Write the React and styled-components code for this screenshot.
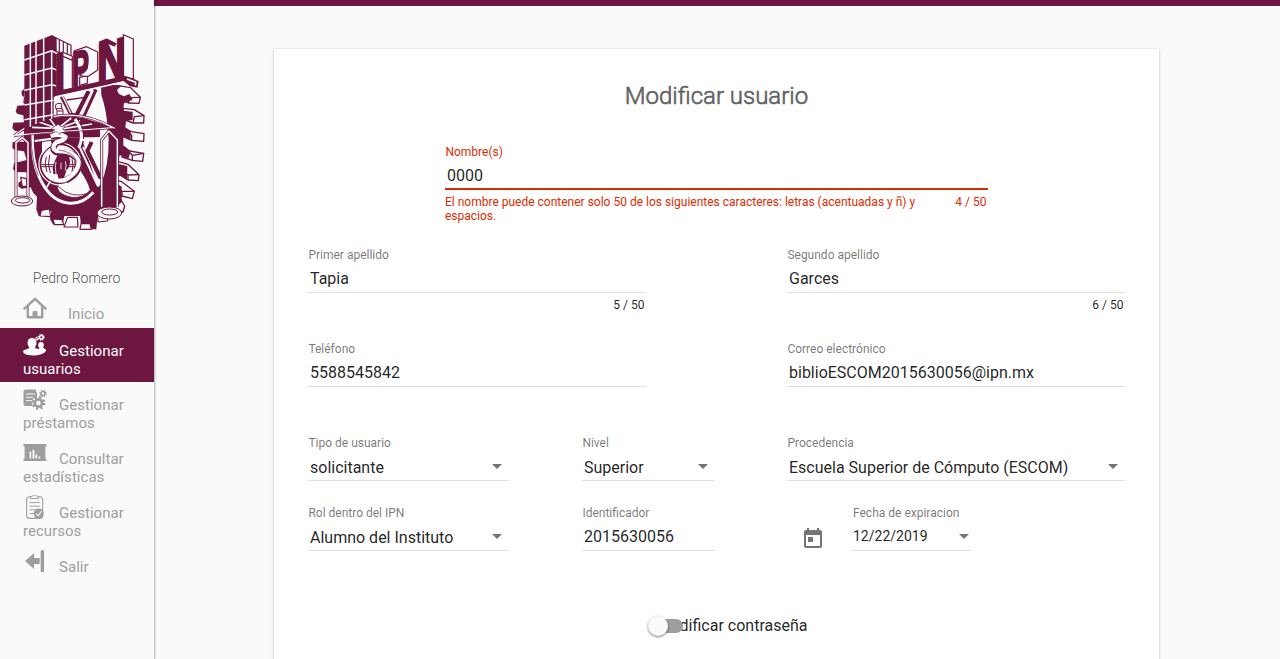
import React from "react";
import styled, { createGlobalStyle } from "styled-components";

const WINE = "#6c1640";
const PAPER = "#fafafa";

const GlobalStyle = createGlobalStyle`
  * { box-sizing: border-box; }
  html, body { margin: 0; padding: 0; }
  body {
    height: 659px;
    overflow: hidden;
    background: ${PAPER};
    color: rgba(0, 0, 0, 0.87);
    font-family: Roboto, "Liberation Sans", sans-serif;
    font-size: 16px;
  }
`;

const Page = styled.div`
  display: flex;
  height: 659px;
  overflow: hidden;
`;

const Sidebar = styled.aside`
  position: relative;
  z-index: 1;
  flex: 0 0 154px;
  height: 659px;
  background: ${PAPER};
  box-shadow: 0 1px 3px rgba(0, 0, 0, 0.3), 0 0 2px rgba(0, 0, 0, 0.4);
`;

const LogoSvg = styled.svg`
  display: block;
  width: 154px;
  height: 250px;
`;

const UserName = styled.div`
  height: 41px;
  padding: 19px 1px 0 0;
  text-align: center;
  font-size: 14px;
  font-weight: 300;
  line-height: 18px;
  letter-spacing: -0.05px;
  color: rgba(0, 0, 0, 0.72);
`;

const NavItem = styled.a`
  display: block;
  height: ${(p) => p.$height}px;
  padding-left: 23px;
  font-size: 15px;
  line-height: 18px;
  color: ${(p) => (p.$active ? "#fff" : "#9e9e9e")};
  background: ${(p) => (p.$active ? WINE : "transparent")};
`;

const NavFirst = styled.div`
  display: flex;
  height: 32px;
  align-items: flex-end;
  gap: ${(p) => p.$gap}px;
`;

const NavLine = styled.span`
  letter-spacing: 0.03px;
`;

const NavIcon = styled.svg`
  width: 24px;
  height: 24px;
  margin-bottom: 3px;
  flex: none;
`;

const Main = styled.main`
  flex: 1;
  border-top: 6px solid ${WINE};
  padding: 43px 121px 0 120px;
`;

const Card = styled.section`
  height: 640px;
  padding: 33px 34px 0;
  background: #fff;
  box-shadow: 0 1px 3px rgba(0, 0, 0, 0.2), 0 0 1px rgba(0, 0, 0, 0.14);
`;

const Title = styled.h2`
  height: 63px;
  margin: 0;
  text-align: center;
  font-size: 24px;
  font-weight: 300;
  line-height: 28px;
  -webkit-text-stroke: 0.6px #616161;
  color: #616161;
`;

const FormRow = styled.div`
  display: grid;
  grid-template-columns: ${(p) => p.$columns};
  justify-content: ${(p) => (p.$centered ? "center" : "start")};
  height: ${(p) => p.$height}px;
`;

const FieldBox = styled.div`
  color: ${(p) => (p.$error ? "#dd2c00" : "inherit")};
`;

const Label = styled.label`
  display: block;
  height: 15px;
  padding-left: ${(p) => p.$indent || 0.4}px;
  font-size: 12px;
  line-height: 14px;
  color: ${(p) => (p.$error ? "#dd2c00" : "rgba(0,0,0,0.54)")};
`;

const Value = styled.div`
  display: flex;
  align-items: center;
  justify-content: space-between;
  height: 30px;
  padding: ${(p) => (p.$select ? "4px 7px 0 2px" : p.$date ? "1px 2px 0 2px" : p.$error ? "4px 6px 0 2px" : "2px 6px 0 2px")};
  border-bottom: ${(p) => (p.$error ? "2px solid #dd2c00" : "1px solid #e0e0e0")};
  font-size: ${(p) => (p.$date ? 14 : 16)}px;
  line-height: 24px;
  color: rgba(0, 0, 0, 0.87);
`;

const Caret = styled.span`
  width: 0;
  margin-bottom: ${(p) => (p.$low ? 0 : 3)}px;
  border-left: 5.5px solid transparent;
  border-right: 5.5px solid transparent;
  border-top: 5.5px solid #757575;
`;

const Hint = styled.div`
  display: flex;
  justify-content: space-between;
  padding: 5px 1.5px 0 0;
  font-size: 12px;
  line-height: 14px;
`;

const HintText = styled.span`
  max-width: 480px;
`;

const CalendarCell = styled.div`
  padding: 21px 0 0 14px;
`;

const SwitchRow = styled.div`
  display: flex;
  justify-content: center;
  height: 24px;
  padding-left: 31px;
`;

const SwitchLabel = styled.span`
  position: relative;
  line-height: 24px;
`;

const Track = styled.span`
  position: absolute;
  left: -1px;
  top: 5px;
  width: 28px;
  height: 14px;
  border-radius: 8px;
  background: #9e9e9e;
`;

const Thumb = styled.span`
  position: absolute;
  left: -7px;
  top: -3px;
  width: 20px;
  height: 20px;
  border-radius: 50%;
  background: ${PAPER};
  box-shadow: 0 1px 3px rgba(0, 0, 0, 0.3), 0 1px 2px rgba(0, 0, 0, 0.25);
`;

function Field({ label, value, select, date, error, hint, count, indent }) {
  return (
    <FieldBox $error={error}>
      <Label $error={error} $indent={indent}>{label}</Label>
      <Value $select={select} $error={error} $date={date}>
        <span>{value}</span>
        {(select || date) && <Caret $low={date} />}
      </Value>
      {count && (
        <Hint>
          <HintText>{hint}</HintText>
          <span>{count}</span>
        </Hint>
      )}
    </FieldBox>
  );
}

/* A small cog: toothed ring drawn with a dashed stroke around a hub. */
function Cog({ cx, cy, r, w, hole }) {
  const step = (2 * Math.PI * r) / 16;
  return (
    <g>
      <circle cx={cx} cy={cy} r={r} fill="none" stroke="currentColor" strokeWidth={w} strokeDasharray={`${step} ${step}`} />
      <circle cx={cx} cy={cy} r={r * 0.66} fill="none" stroke="currentColor" strokeWidth={hole} />
    </g>
  );
}

function Logo() {
  return (
    <LogoSvg viewBox="0 -60 462 750" fill="none" stroke={WINE} strokeWidth="4" strokeLinejoin="round">
      {/* side teeth seen in depth */}
      <g fill={PAPER}>
        <path d="M350 196L392 203L421 232L417 250L385 249L350 232Z" />
        <path d="M370 265L403 269L432 287L431 309L399 309L369 298Z" />
        <path d="M375 327L394 335L432 341L431 364L395 361L371 351Z" />
        <path d="M370 379L389 393L431 400L428 424L397 421L366 411Z" />
        <path d="M355 425L384 433L417 464L415 482L384 480L356 462Z" />
        <path d="M346 480L365 485L403 514L397 536L366 528L343 520Z" />
        <path d="M340 526L357 530L374 558L369 576L340 568Z" />
      </g>
      <path d="M385 249L390 233L421 232M399 309L403 290L432 287M395 361V346L375 327M397 421V406L431 400M397 406L370 379M384 480V465L417 464M384 465L355 440M366 528V514L403 514M366 514L343 498" />
      {/* gear body and dark teeth */}
      <path fill={WINE} stroke="none" d="M74 205L64 215L67 229L74 231V256L52 257L47 275L53 282L70 286L72 307L40 308L37 324L45 333L72 334L72 365L38 366L37 384L45 390L72 394L80 420L42 430L39 448L50 456L80 457L88 474L56 487L55 499L65 506L92 502L100 519L111 530L109 568L116 588H124L130 572L154 574L150 598L160 614L188 615L193 588H240L244 628L289 628L292 594L304 604L324 595L319 590L365 546V500L350 490V470L362 468L381 480L382 438L355 432L359 405L385 417L391 397L370 379V352L392 360V333L376 322L378 303L398 300V275L369 272L372 250L398 239L388 222L372 229L357 222L350 210L364 198L308 190L170 224L70 250Z" />
      {/* bottom teeth fronts */}
      <g fill={PAPER} strokeWidth="3.5">
        <path d="M124 571L148 567L152 590L120 588Z" />
        <path d="M158 597L186 599L191 614H164Z" />
        <path d="M203 592L232 592L234 621H192Z" />
        <path d="M243 611H270L274 628H240Z" />
        <path d="M293 584L327 589L322 603L294 606Z" />
        <path d="M62 472L80 476L81 498L67 500Z" />
      </g>
      {/* open centre */}
      <path fill={PAPER} stroke="none" d="M160 231L303 199L304 225Q320 272 322 320L326 358Q327 440 302 493L295 502L281 476L249 400L165 364L155 330Z" />
      <path fill={WINE} stroke="none" d="M100 352H244L270 430L295 506Q250 548 205 548Q131 520 108 450Z" />
      {/* shield outline */}
      <path stroke={PAPER} strokeWidth="9" d="M97 342Q95 420 116 467Q147 542 203 549Q247 555 280 517" />
      <path stroke={WINE} strokeWidth="2" d="M93 345Q94 421 115 467" />
      {/* braces below the lettering */}
      <path stroke={WINE} strokeWidth="12" d="M185 229L214 284M287 208L243 304M266 213L222 300" />
      <path stroke={WINE} strokeWidth="4" d="M200 240L255 232M207 282H236" />
      <path stroke={PAPER} strokeWidth="4" d="M187 227L212 279M280 211L240 300" />
      {/* centre post */}
      <path fill={PAPER} strokeWidth="3" d="M174 250H184V264L189 270V318H171V270L167 266V254Z" />
      <path strokeWidth="3" d="M168 266H188M172 273H188" />
      {/* arch under the beam with its spokes */}
      <path fill={WINE} stroke="none" d="M75 332Q186 250 338 325L300 329V352H104V335Z" />
      <path stroke={PAPER} strokeWidth="5" d="M170 325L96 322M170 325L118 306M170 325L148 295M178 322L214 294M178 325L240 302M178 328L276 312" />
      <path stroke={PAPER} strokeWidth="9" d="M225 297Q257 340 236 384" />
      <path stroke={WINE} strokeWidth="3" d="M234 299Q263 340 244 384" />
      <g stroke={PAPER} strokeWidth="6">
        <path d="M104 363L166 355M243 361L307 354" />
        <path d="M240 384L294 499M249 381L304 483" />
      </g>
      <path stroke={WINE} strokeWidth="12" d="M275 366L262 393L302 475" />
      <path fill={PAPER} stroke="none" d="M126 366L152 362Q160 380 152 391L126 404Z" />
      {/* flask */}
      <path strokeWidth="2.5" fill={PAPER} d="M184 478L232 438Q264 480 271 510Q250 536 215 532Q178 524 173 506Q172 490 184 478Z" />
      <path strokeWidth="2.5" d="M176 500Q212 538 269 519" />
      <path stroke={PAPER} strokeWidth="5" d="M140 502L152 482" />
      {/* globe */}
      <circle cx="180" cy="432" r="58" fill={PAPER} strokeWidth="3.5" />
      <circle cx="180" cy="432" r="63" stroke={PAPER} strokeWidth="3.5" />
      <path fill={WINE} stroke="none" d="M164 424L178 394L206 404L211 426L205 445L200 449L192 474L176 476L172 462L160 462L158 444Z" />
      <path strokeWidth="3" d="M139 410Q131 434 141 456M149 405Q141 434 151 459M124 434H236M124 440H234M216 418Q222 436 216 454M224 424Q228 437 222 448" />
      <path stroke={PAPER} strokeWidth="2.5" d="M168 425Q164 440 168 462M196 424Q200 438 196 452M183 428V448" />
      {/* serpent rising over the globe */}
      <path stroke={WINE} strokeWidth="19" d="M152 350Q184 341 199 351Q196 365 172 366Q150 386 170 397Q222 394 236 424Q240 461 197 481" />
      <path stroke={PAPER} strokeWidth="13" d="M152 348Q182 339 197 351Q192 362 170 366Q151 384 170 393Q224 391 236 425Q237 458 192 482" />
      <path stroke={WINE} strokeWidth="2" d="M177 390Q214 394 230 422" />
      <path fill={PAPER} strokeWidth="2" d="M167 317L152 328L164 329L154 340L170 334L179 343L184 334L202 336L188 327L196 320L181 320L176 313Z" />
      {/* balance beam, chains and pans */}
      <path stroke={WINE} strokeWidth="8" d="M42 347Q185 236 344 325" />
      <path stroke={PAPER} strokeWidth="4" d="M42 347Q185 236 344 325M40 346L341 323" />
      <path strokeWidth="2" d="M42 350L165 337M190 336L342 326" />
      <path stroke={WINE} strokeWidth="9" d="M48 535V368L67 353L84 368V530M305 560V360L327 333L352 360V560" />
      <path stroke={PAPER} strokeWidth="4.5" d="M48 535V368L67 353L84 368V530M305 560V360L327 333L352 360V560" />
      <g fill={PAPER} strokeWidth="3">
        <ellipse cx="66" cy="543" rx="32" ry="15" />
        <ellipse cx="68" cy="541" rx="22" ry="8" />
        <ellipse cx="328" cy="579" rx="37" ry="18" />
        <ellipse cx="329" cy="576" rx="24" ry="9" />
      </g>
      {/* tower */}
      <path fill={WINE} stroke="none" d="M73 77L155 46L170 54V225L161 230V294Q105 305 78 328H73Z" />
      <path fill={PAPER} strokeWidth="3.5" d="M155 47L213 76V111L155 89Z" />
      <path fill={WINE} stroke="none" d="M155 47L170 55V96L155 91Z" />
      <path strokeWidth="3.5" d="M178 60V96M190 66V101M202 71V105" />
      <g stroke={PAPER} strokeWidth="4.5">
        <path d="M91 70V320M108 63V312M131 55V303M155 92V296" />
        <path d="M73 120L155 92L173 102M73 165L155 144L173 151M73 211L155 194L170 198M73 255L160 241M73 299L160 284" />
      </g>
      {/* platform */}
      <path fill={WINE} stroke="none" d="M161 215L381 166L416 184L413 203L386 198L370 184L164 229Z" />
      <path stroke={PAPER} strokeWidth="5" d="M165 231L370 186L386 199M381 177L407 187L406 196" />
      {/* depth faces of the block lettering */}
      <g fill={PAPER} strokeWidth="3.5">
        <path d="M187 108L217 121V205L187 211Z" />
        <path d="M174 103L187 96L217 109V121L187 108Z" />
        <path d="M221 93L260 80L293 96V150L262 171L239 166L262 145V106Z" />
        <path d="M239 172L262 168V190L239 196Z" />
        <path d="M370 44L400 57V177L370 168Z" />
        <path fill={WINE} d="M298 66L320 57L348 71L343 78L320 68Z" />
      </g>
      <g fill={WINE} stroke={WINE} strokeWidth="5" fontFamily="Liberation Sans, sans-serif" fontWeight="700" fontSize="100">
        <text transform="matrix(1.1 -0.1 0 1.58 164 213)">I</text>
        <text transform="matrix(0.76 -0.16 0 1.47 216 200)">P</text>
        <text transform="matrix(1.18 -0.28 0 1.68 292 188)">N</text>
      </g>
    </LogoSvg>
  );
}

const HomeIcon = () => (
  <NavIcon viewBox="0 0 24 24" fill="none" stroke="currentColor" strokeWidth="2.4" strokeLinecap="round" strokeLinejoin="round">
    <path d="M1.4 12.6L12 2.8L22.6 12.6M4.8 10.4V21.2H19.2V10.4" />
    <path d="M10 20.9V15.6H14V20.9" fill="currentColor" strokeWidth="1" />
  </NavIcon>
);

const UsersIcon = () => (
  <NavIcon viewBox="0 0 24 24" fill="currentColor">
    <ellipse cx="9" cy="10" rx="4.5" ry="5.2" />
    <path d="M6.5 13.5H12L12.5 15.5L23 16.7C24 19 18 22.5 10 22.5S-1 19.5 .5 17.5C2 16.1 6.5 16.5 6.5 13.5Z" />
    <ellipse cx="18" cy="12.1" rx="2.8" ry="3.2" />
    <path d="M16.5 13.5H19.5C19.5 15.5 22.8 15.5 23 17.5H16Z" />
    <Cog cx={18.3} cy={4.3} r={2.7} w={1.5} hole={1.5} />
    <Cog cx={13.9} cy={5.7} r={1.6} w={0.9} hole={1} />
  </NavIcon>
);

const LoansIcon = () => (
  <NavIcon viewBox="0 0 24 24">
    <path fill="currentColor" d="M3 2.5H12.5L14 6V19H3Q.5 19 .5 16.5V5Q.5 2.5 3 2.5Z" />
    <path stroke={PAPER} strokeWidth="1" d="M3 7H12M3 10.3H10M3 13.6H9" />
    <circle cx="15.4" cy="16" r="6.6" fill={PAPER} />
    <Cog cx={15.4} cy={16} r={5.6} w={2.7} hole={2.8} />
    <Cog cx={20} cy={6.5} r={3} w={1.6} hole={1.5} />
  </NavIcon>
);

const StatsIcon = () => (
  <NavIcon viewBox="0 0 24 24">
    <path fill="currentColor" d="M.5 3H23.5V5.4H22.4V17.8H23.5V20H.5V17.8H1.6V5.4H.5Z" />
    <path fill={PAPER} d="M6.5 10.8H8.2V17.5H6.5ZM9.5 8.8H11.4V17.5H9.5ZM12.5 13.5H14.2V17.5H12.5ZM15.5 15.6H17.2V17.5H15.5Z" />
  </NavIcon>
);

const ClipboardIcon = () => (
  <NavIcon viewBox="0 0 24 24" fill="none" stroke="currentColor">
    <rect x="3.6" y="1.8" width="16" height="21.6" rx="3" strokeWidth="1.1" />
    <path fill={PAPER} strokeWidth="1" d="M7.5 3.6V1.6L9.8 .9Q11.5 -1.6 13.2 .9L15.7 1.6V3.6Z" />
    <path strokeWidth="1" d="M6.5 7.6H16.7M6.5 11.2H16.7M6.5 14.8H13M6.5 18.5H11" />
    <circle cx="15.7" cy="18.6" r="5" fill="currentColor" stroke="none" />
    <path stroke={PAPER} strokeWidth="1.1" d="M13.2 18.6L15.1 20.8L18.5 16.2" />
  </NavIcon>
);

const ExitIcon = () => (
  <NavIcon viewBox="0 0 24 24" fill="currentColor">
    <path d="M2 12L11 4.3V9H16.7V15H11V20ZM17.7 1.2H21V23H17.7Z" />
  </NavIcon>
);

const navItems = [
  { icon: HomeIcon, first: "Inicio", gap: 21, height: 37 },
  { icon: UsersIcon, first: "Gestionar", second: "usuarios", active: true },
  { icon: LoansIcon, first: "Gestionar", second: "préstamos" },
  { icon: StatsIcon, first: "Consultar", second: "estadísticas" },
  { icon: ClipboardIcon, first: "Gestionar", second: "recursos" },
  { icon: ExitIcon, first: "Salir", height: 36 },
];

export default function App() {
  return (
    <>
      <GlobalStyle />
      <Page>
        <Sidebar>
          <Logo />
          <UserName>Pedro Romero</UserName>
          <nav>
            {navItems.map(({ icon: Icon, first, second, gap = 12, height = 54, active }, i) => (
              <NavItem key={i} $active={active} $height={height}>
                <NavFirst $gap={gap}>
                  <Icon />
                  <NavLine>{first}</NavLine>
                </NavFirst>
                {second && <NavLine>{second}</NavLine>}
              </NavItem>
            ))}
          </nav>
        </Sidebar>
        <Main>
          <Card>
            <Title>Modificar usuario</Title>
            <FormRow $columns="543px" $height={103} $centered>
              <Field
                label="Nombre(s)"
                value="0000"
                error
                hint="El nombre puede contener solo 50 de los siguientes caracteres: letras (acentuadas y ñ) y espacios."
                count="4 / 50"
              />
            </FormRow>
            <FormRow $columns="338px 141px 338px" $height={94}>
              <Field label="Primer apellido" value="Tapia" count="5 / 50" />
              <span />
              <Field label="Segundo apellido" value="Garces" count="6 / 50" />
            </FormRow>
            <FormRow $columns="338px 141px 338px" $height={94}>
              <Field label="Teléfono" value="5588545842" />
              <span />
              <Field label="Correo electrónico" value="biblioESCOM2015630056@ipn.mx" />
            </FormRow>
            <FormRow $columns="201px 73px 133px 72px 338px" $height={70}>
              <Field label="Tipo de usuario" value="solicitante" select />
              <span />
              <Field label="Nivel" value="Superior" select />
              <span />
              <Field label="Procedencia" value="Escuela Superior de Cómputo (ESCOM)" select />
            </FormRow>
            <FormRow $columns="201px 73px 133px 72px 64px 120px" $height={108}>
              <Field label="Rol dentro del IPN" value="Alumno del Instituto" select />
              <span />
              <Field label="Identificador" value="2015630056" />
              <span />
              <CalendarCell>
                <svg width="24" height="24" viewBox="0 0 24 24" fill="#757575">
                  <path d="M19 3h-1V1h-2v2H8V1H6v2H5c-1.11 0-1.99.9-1.99 2L3 19c0 1.1.89 2 2 2h14c1.1 0 2-.9 2-2V5c0-1.1-.9-2-2-2zm0 16H5V8h14v11zM7 10h5v5H7z" />
                </svg>
              </CalendarCell>
              <Field label="Fecha de expiracion" value="12/22/2019" date indent={2} />
            </FormRow>
            <SwitchRow>
              <SwitchLabel>
                Modificar contraseña
                <Track>
                  <Thumb />
                </Track>
              </SwitchLabel>
            </SwitchRow>
          </Card>
        </Main>
      </Page>
    </>
  );
}
